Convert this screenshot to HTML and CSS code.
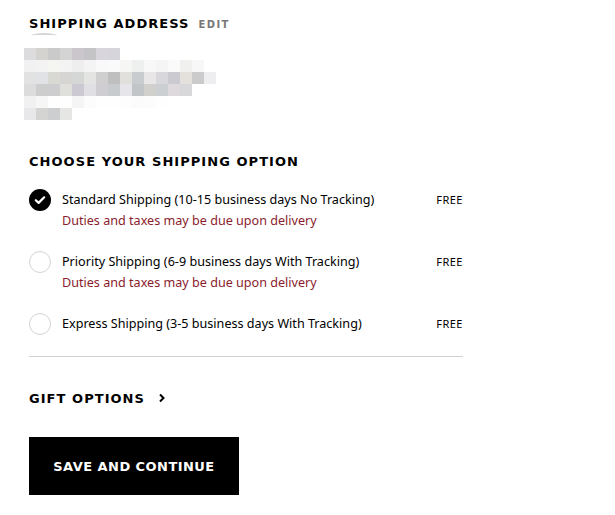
FILE: index.html
```html
<!DOCTYPE html>
<html>
<head>
<meta charset="utf-8">
<link rel="stylesheet" href="styles.css">
</head>
<body>
<div class="page">
  <div class="address-head">
    <h2 class="heading">SHIPPING ADDRESS</h2>
    <span class="edit">EDIT</span>
  </div>
  <div class="address-blur">
    <div class="smudge"></div>
    <div class="pix">
      <div class="prow">
        <i style="background:#dcdbde"></i><i style="background:#d4d3d0"></i><i style="background:#cacaca"></i><i style="background:#d5d4d4"></i><i style="background:#cbc6cc"></i><i style="background:#c4c3c5"></i><i style="background:#d8d6dc"></i><i style="background:#d7d5dc"></i>
      </div>
      <div class="prow">
        <i style="background:#f1f1f1"></i><i style="background:#f3f3f3"></i><i style="background:#f5f5f2"></i><i style="background:#f3f3f3"></i><i style="background:#eeeeee"></i><i style="background:#f4f4f4"></i><i style="background:#f9f9f9"></i><i style="background:#fafafa"></i><i style="background:#f6f6f4"></i><i style="background:#eef0ef"></i><i style="background:#f8f8f8"></i><i style="background:#f5f5f5"></i><i style="background:#fafafa"></i><i style="background:#f0f0ee"></i><i style="background:#f7f7f7"></i>
      </div>
      <div class="prow">
        <i style="background:#e2e2e2"></i><i style="background:#e1e2e6"></i><i style="background:#d9d9d3"></i><i style="background:#d6d5d3"></i><i style="background:#d4d7d6"></i><i style="background:#e4e4e2"></i><i style="background:#cfcfcf"></i><i style="background:#bfbfbf"></i><i style="background:#e1e0dc"></i><i style="background:#c8ccce"></i><i style="background:#e8e6e7"></i><i style="background:#d8d8dc"></i><i style="background:#cccad1"></i><i style="background:#e4e1dd"></i><i style="background:#cccbcc"></i><i style="background:#eeeef0"></i>
      </div>
      <div class="prow">
        <i style="background:#dddcdd"></i><i style="background:#cdcdcd"></i><i style="background:#cdcdd0"></i><i style="background:#dfdfdb"></i><i style="background:#cdc9d2"></i><i style="background:#e0e0e4"></i><i style="background:#cfcdd2"></i><i style="background:#c8cbcd"></i><i style="background:#e6e5ea"></i><i style="background:#c1c5c7"></i><i style="background:#d2d0cd"></i><i style="background:#cbcfd2"></i><i style="background:#ddd9dd"></i><i style="background:#d8d8da"></i>
      </div>
      <div class="prow">
        <i style="background:#f1f1f1"></i><i style="background:#f6f6f6"></i><i style="background:#fefefe"></i><i style="background:#fefefe"></i><i style="background:#f5f5f5"></i><i style="background:#fcfcfc"></i><i style="background:#fefefe"></i><i style="background:#fefefe"></i><i style="background:#fdfdfd"></i><i style="background:#fbfbfb"></i><i style="background:#fcfcfc"></i><i style="background:#fefefe"></i>
      </div>
      <div class="prow">
        <i style="background:#e8e7e9"></i><i style="background:#d4d4d2"></i><i style="background:#ccced0"></i><i style="background:#e6e7e5"></i>
      </div>
    </div>
  </div>

  <h2 class="heading options-title">CHOOSE YOUR SHIPPING OPTION</h2>

  <div class="options">
    <div class="option">
      <span class="radio checked">
        <svg viewBox="0 0 22 22" width="22" height="22"><circle cx="11" cy="11" r="11" fill="#000"/><path d="M6.8 11.2 L9.6 13.9 L15.2 8.3" fill="none" stroke="#fff" stroke-width="2.2" stroke-linecap="round" stroke-linejoin="round"/></svg>
      </span>
      <div class="option-body">
        <div class="option-name">Standard Shipping (10-15 business days No Tracking)</div>
        <div class="option-note">Duties and taxes may be due upon delivery</div>
      </div>
      <span class="price">FREE</span>
    </div>
    <div class="option">
      <span class="radio"></span>
      <div class="option-body">
        <div class="option-name">Priority Shipping (6-9 business days With Tracking)</div>
        <div class="option-note">Duties and taxes may be due upon delivery</div>
      </div>
      <span class="price">FREE</span>
    </div>
    <div class="option">
      <span class="radio"></span>
      <div class="option-body">
        <div class="option-name">Express Shipping (3-5 business days With Tracking)</div>
      </div>
      <span class="price">FREE</span>
    </div>
  </div>

  <div class="divider"></div>

  <div class="gift">
    <span class="heading gift-label">GIFT OPTIONS</span>
    <svg class="chev" viewBox="0 0 8 10" width="8" height="10"><path d="M2 1.5 L5.5 5 L2 8.5" fill="none" stroke="#000" stroke-width="2"/></svg>
  </div>

  <button class="save">SAVE AND CONTINUE</button>
</div>
</body>
</html>
```

FILE: styles.css
```css
html, body {
  margin: 0;
  padding: 0;
  background: #fff;
}
body {
  font-family: "Noto Sans", "DejaVu Sans", sans-serif;
  color: #000;
}
.page {
  padding: 16px 0 0 29px;
  width: 434px;
}
.heading {
  margin: 0;
  font-family: "DejaVu Sans", sans-serif;
  font-weight: bold;
  font-size: 13px;
  line-height: 15px;
  letter-spacing: 1.05px;
  color: #000;
}
.address-head {
  display: flex;
  align-items: baseline;
  gap: 9px;
}
.edit {
  font-family: "DejaVu Sans", sans-serif;
  font-weight: bold;
  font-size: 10px;
  letter-spacing: 1.4px;
  color: #777;
}
.address-blur {
  margin-left: -5px;
}
.smudge {
  margin: 2px 0 0 7px;
  width: 26px;
  height: 3px;
  border-radius: 50% 50% 0 0;
  border-top: 2px solid #d6d6d6;
}
.pix {
  margin-top: 10px;
}
.prow {
  display: flex;
  height: 12px;
}
.prow i {
  display: block;
  width: 12px;
  height: 12px;
}
.options-title {
  margin-top: 34px;
}
.options {
  margin-top: 20px;
  display: flex;
  flex-direction: column;
  gap: 20px;
}
.option {
  display: flex;
  align-items: flex-start;
}
.radio {
  width: 22px;
  height: 22px;
  box-sizing: border-box;
  border: 1px solid #d4d4d4;
  border-radius: 50%;
  flex: none;
}
.radio.checked {
  border: none;
}
.radio svg {
  display: block;
}
.option-body {
  margin-left: 11px;
  flex: 1;
}
.option-name {
  font-size: 12.6px;
  line-height: 21px;
}
.option-note {
  font-size: 12.6px;
  line-height: 21px;
  color: #8a1c2c;
}
.price {
  font-size: 11px;
  line-height: 21px;
  letter-spacing: 0.5px;
}
.divider {
  margin-top: 21px;
  height: 1px;
  background: #d0d0d0;
}
.gift {
  margin-top: 33px;
  display: flex;
  align-items: center;
  gap: 13px;
  height: 16px;
}
.chev {
  display: block;
}
.save {
  margin-top: 31px;
  width: 210px;
  height: 58px;
  background: #000;
  color: #fff;
  border: none;
  font-family: "DejaVu Sans", sans-serif;
  font-weight: bold;
  font-size: 13px;
  letter-spacing: 0.45px;
  padding: 0;
}
```
